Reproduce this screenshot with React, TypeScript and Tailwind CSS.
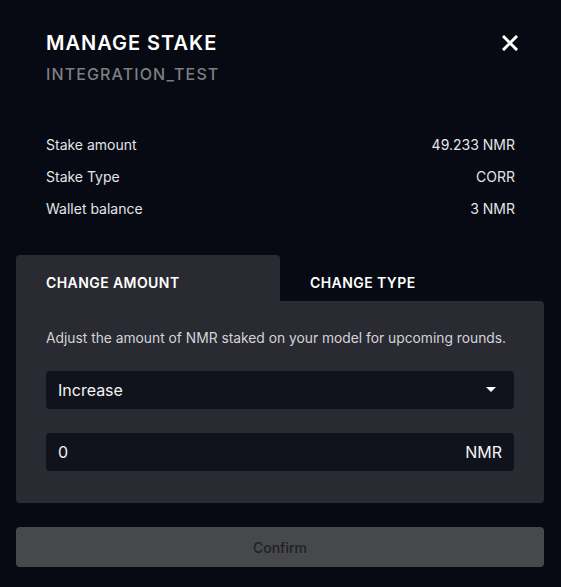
import React from "react";

const head = { fontFamily: "Inter, 'Noto Sans', sans-serif" } as const;

export default function App() {
  return (
    <div className="w-[561px] h-[587px] bg-[#070a12] text-white flex flex-col" style={head}>
      <div className="flex justify-between items-start pl-[46px] pr-[43px] pt-[31px]">
        <div className="flex flex-col">
          <div className="text-[20px] leading-[24px] font-semibold tracking-[0.05em] text-white">MANAGE STAKE</div>
          <div className="text-[16px] leading-[20px] font-medium tracking-[0.07em] text-[#7d7e82] mt-[9px]">INTEGRATION_TEST</div>
        </div>
        <svg width="16" height="16" viewBox="0 0 16 16" className="mt-[4px]">
          <path d="M2 2 L14 14 M14 2 L2 14" stroke="white" strokeWidth="3" strokeLinecap="square" />
        </svg>
      </div>

      <div className="flex flex-col px-[46px] mt-[50px] text-[14px] text-[#e4e4e7] gap-[12px]">
        <div className="flex justify-between h-[20px] items-center"><span>Stake amount</span><span>49.233 NMR</span></div>
        <div className="flex justify-between h-[20px] items-center"><span>Stake Type</span><span>CORR</span></div>
        <div className="flex justify-between h-[20px] items-center"><span>Wallet balance</span><span>3 NMR</span></div>
      </div>

      <div className="ml-[16px] w-[528px] mt-[37px] flex flex-col">
        <div className="flex h-[46px]">
          <div className="w-[264px] bg-[#2a2a33] rounded-t-[4px] flex items-center pt-[9px] pl-[30px] text-[14px] font-semibold tracking-[0.03em]">CHANGE AMOUNT</div>
          <div className="flex items-center pt-[9px] pl-[30px] text-[14px] font-semibold tracking-[0.03em]">CHANGE TYPE</div>
        </div>
        <div className="bg-[#2a2a33] rounded-b-[4px] rounded-tr-[4px] px-[30px] pt-[27px] pb-[32px] flex flex-col">
          <div className="text-[13.8px] text-[#d4d4d8] leading-[20px]">Adjust the amount of NMR staked on your model for upcoming rounds.</div>
          <div className="mt-[23px] h-[38px] bg-[#10131b] rounded-[4px] flex items-center justify-between pl-[12px] pr-[18px] text-[16px] text-[#f4f4f5]">
            <span>Increase</span>
            <svg width="10" height="6" viewBox="0 0 10 6"><path d="M0 0 L10 0 L5 5 Z" fill="white" /></svg>
          </div>
          <div className="mt-[24px] h-[38px] bg-[#10131b] rounded-[4px] flex items-center justify-between px-[12px] text-[16px] text-[#f4f4f5]">
            <span>0</span>
            <span>NMR</span>
          </div>
        </div>
        <div className="mt-[24px] h-[40px] bg-[#47484c] rounded-[4px] flex items-center justify-center text-[14px] font-medium text-[#1f2025]">Confirm</div>
      </div>
    </div>
  );
}
